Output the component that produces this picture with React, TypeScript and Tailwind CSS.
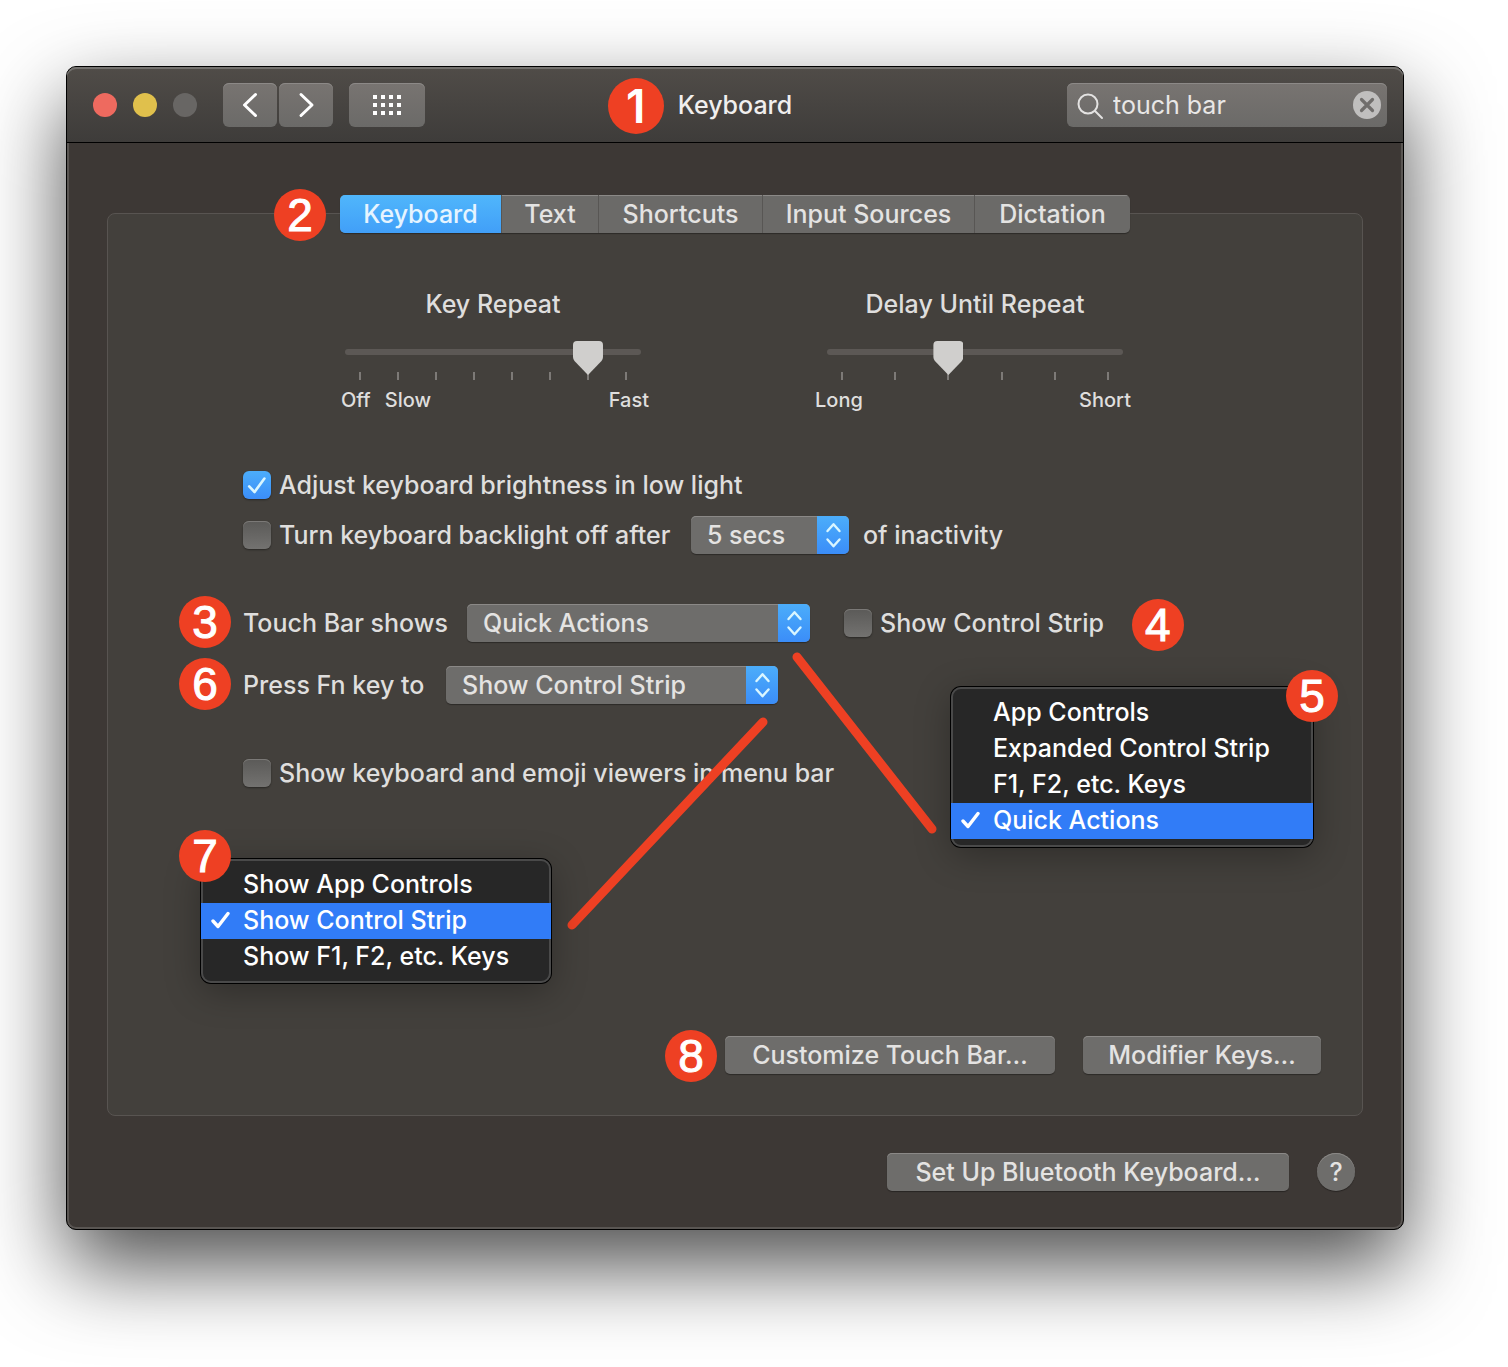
import { useState } from "react";
import type { ReactNode } from "react";
import clsx from "clsx";

const tabs = [
  { name: "Keyboard", width: "w-[162px]" },
  { name: "Text", width: "w-[97px]" },
  { name: "Shortcuts", width: "w-[164px]" },
  { name: "Input Sources", width: "w-[212px]" },
  { name: "Dictation", width: "w-[155px]" },
];

const touchBarOptions = [
  "App Controls",
  "Expanded Control Strip",
  "F1, F2, etc. Keys",
  "Quick Actions",
];

const fnKeyOptions = [
  "Show App Controls",
  "Show Control Strip",
  "Show F1, F2, etc. Keys",
];

const raised =
  "bg-[#6e6d6b] shadow-[inset_0_1px_0_#8b8987,0_1px_1px_rgba(0,0,0,0.35)]";

const toolbarFill =
  "rounded-md bg-linear-to-b from-[#787471] to-[#6b6a68] shadow-[inset_0_1px_0_#8c8987]";

function Badge({
  children,
  className,
  size = "size-[52px] font-['Liberation_Sans',sans-serif] font-normal [-webkit-text-stroke:1px_white]",
}: {
  children: ReactNode;
  className: string;
  size?: string;
}) {
  return (
    <span
      className={clsx(
        "absolute z-20 flex items-center justify-center rounded-full bg-[#ee4023] text-[46px] leading-none text-white",
        size,
        className,
      )}
    >
      {children}
    </span>
  );
}

function PushButton({ children, className }: { children: ReactNode; className?: string }) {
  return (
    <button
      type="button"
      className={clsx("h-[38px] rounded-[5px] text-center text-[#e4e3e2]", raised, className)}
    >
      {children}
    </button>
  );
}

function Checkbox({
  label,
  defaultChecked,
  className,
}: {
  label: string;
  defaultChecked?: boolean;
  className?: string;
}) {
  return (
    <label className={clsx("flex items-center gap-2 whitespace-nowrap", className)}>
      <span className="relative block size-7">
        <input
          type="checkbox"
          defaultChecked={defaultChecked}
          className="peer block size-7 appearance-none rounded-md bg-linear-to-b from-[#5b5a58] to-[#737270] shadow-[inset_0_1px_0_#7b7977,0_1px_2px_rgba(0,0,0,0.4)] checked:from-[#4cadfa] checked:to-[#3b8df8] checked:shadow-[0_1px_2px_rgba(0,0,0,0.4)]"
        />
        <svg
          viewBox="0 0 28 28"
          className="pointer-events-none absolute inset-0 hidden size-7 peer-checked:block"
          fill="none"
          stroke="#d9f6ff"
          strokeWidth="2.6"
          strokeLinecap="round"
          strokeLinejoin="round"
        >
          <path d="M6.2 15.4L11.6 21L21.4 7.6" />
        </svg>
      </span>
      {label}
    </label>
  );
}

function PopUp({
  id,
  label,
  value,
  options,
  className,
}: {
  id: string;
  label?: string;
  value: string;
  options: string[];
  className: string;
}) {
  return (
    <span className={clsx("relative block h-[38px]", className)}>
      <select
        id={id}
        aria-label={label}
        defaultValue={value}
        className={clsx(
          "block h-full w-full appearance-none rounded-[5px] pl-4 text-[#e4e3e2]",
          raised,
        )}
      >
        {options.map((option) => (
          <option key={option}>{option}</option>
        ))}
      </select>
      <span className="pointer-events-none absolute inset-y-0 right-0 w-8 rounded-r-[5px] bg-linear-to-b from-[#4cadfa] to-[#3b8df8]">
        <svg
          viewBox="0 0 32 38"
          className="h-full w-full"
          fill="none"
          stroke="#d9f6ff"
          strokeWidth="2.4"
          strokeLinecap="round"
          strokeLinejoin="round"
        >
          <path d="M10.5 15L16.5 8.2L22.5 15M10.5 23.5L16.5 30.3L22.5 23.5" />
        </svg>
      </span>
    </span>
  );
}

function TickSlider({
  id,
  title,
  max,
  value,
  labels,
  labelsClass,
}: {
  id: string;
  title: string;
  max: number;
  value: number;
  labels: ReactNode;
  labelsClass: string;
}) {
  return (
    <div className="w-[296px]">
      <label htmlFor={id} className="block text-center">
        {title}
      </label>
      <div className="relative mt-[29px]">
        <div className="absolute inset-x-3.5 top-[23px] flex justify-between">
          {Array.from({ length: max + 1 }, (_, i) => (
            <span key={i} className="h-2 w-0.5 bg-[#7d7a77]" />
          ))}
        </div>
        <input
          id={id}
          type="range"
          min={0}
          max={max}
          defaultValue={value}
          className="relative block h-1.5 w-full appearance-none rounded-full bg-[#5c5855] [&::-webkit-slider-runnable-track]:h-1.5 [&::-webkit-slider-thumb]:-mt-2 [&::-webkit-slider-thumb]:h-[34px] [&::-webkit-slider-thumb]:w-[30px] [&::-webkit-slider-thumb]:appearance-none [&::-webkit-slider-thumb]:bg-[#d0cfcd] [&::-webkit-slider-thumb]:[clip-path:path('M4_0H26Q30_0_30_4V16Q30_18_28.5_20L15_34L1.5_20Q0_18_0_16V4Q0_0_4_0Z')]"
        />
      </div>
      <div className={clsx("mt-[33px] flex justify-between text-xl leading-6", labelsClass)}>
        {labels}
      </div>
    </div>
  );
}

function Menu({
  items,
  selected,
  className,
}: {
  items: string[];
  selected: string;
  className: string;
}) {
  return (
    <ul
      className={clsx(
        "absolute z-10 rounded-[10px] bg-[#272727] py-2 text-white shadow-[inset_0_0_0_2px_#4a4a4a,0_0_0_1px_#000,0_8px_36px_rgba(0,0,0,0.3)]",
        className,
      )}
    >
      {items.map((item) => (
        <li
          key={item}
          className={clsx(
            "relative h-9 pl-[42px] leading-[34px]",
            item === selected && "bg-[#317cf7]",
          )}
        >
          {item === selected && (
            <svg
              viewBox="0 0 20 20"
              className="absolute top-2 left-2.5 size-5"
              fill="none"
              stroke="currentColor"
              strokeWidth="3.4"
              strokeLinecap="round"
              strokeLinejoin="round"
            >
              <path d="M2 10L7 15.5L17 2.5" />
            </svg>
          )}
          {item}
        </li>
      ))}
    </ul>
  );
}

function ToolButton({ label, children }: { label: string; children: ReactNode }) {
  return (
    <button type="button" aria-label={label} className={clsx("h-11 w-[54px]", toolbarFill)}>
      <svg
        viewBox="0 0 54 44"
        className="h-full w-full"
        fill="none"
        stroke="#fff"
        strokeWidth="3"
        strokeLinecap="round"
        strokeLinejoin="round"
      >
        {children}
      </svg>
    </button>
  );
}

function TitleBar() {
  const [query, setQuery] = useState("touch bar");

  return (
    <header className="grid h-[76px] grid-cols-[1fr_auto_1fr] items-center rounded-t-[9px] border-b border-black bg-linear-to-b from-[#504c48] to-[#3e3c3a] px-4 shadow-[inset_0_2px_0_#74726f]">
      <div className="flex items-center pl-2.5">
        <div className="flex gap-4">
          <button type="button" aria-label="Close" className="size-6 rounded-full bg-[#ee6a5f]" />
          <button type="button" aria-label="Minimize" className="size-6 rounded-full bg-[#e0c04c]" />
          <button type="button" aria-label="Zoom" className="size-6 rounded-full bg-[#686664]" />
        </div>
        <div className="ml-[26px] flex gap-0.5">
          <ToolButton label="Back">
            <path d="M32.5 11.5L21.5 22L32.5 32.5" />
          </ToolButton>
          <ToolButton label="Forward">
            <path d="M22 11.5L33 22L22 32.5" />
          </ToolButton>
        </div>
        <button
          type="button"
          aria-label="Show All"
          className={clsx("ml-4 flex h-11 w-[76px] items-center justify-center", toolbarFill)}
        >
          <svg viewBox="0 0 28 20" className="h-5 w-7" fill="#fff">
            {[0, 8, 16].map((y) =>
              [0, 8, 16, 24].map((x) => (
                <rect key={`${x}-${y}`} x={x} y={y} width="4" height="4" />
              )),
            )}
          </svg>
        </button>
      </div>

      <div className="relative">
        <Badge
          size="size-14 font-semibold"
          className="-top-[11px] right-full mr-3.5"
        >
          1
        </Badge>
        <h1 className="text-[#f0efee]">Keyboard</h1>
      </div>

      <div className="relative w-80 justify-self-end">
        <svg
          viewBox="0 0 28 28"
          className="pointer-events-none absolute top-[9px] left-[9px] size-7"
          fill="none"
          stroke="#e4e3e2"
          strokeWidth="2"
          strokeLinecap="round"
        >
          <circle cx="12" cy="12" r="9.5" />
          <path d="M19 19L26 26" />
        </svg>
        <input
          type="text"
          aria-label="Search"
          value={query}
          onChange={(e) => setQuery(e.target.value)}
          className={clsx(
            "block h-11 w-full pr-12 pl-[46px] font-normal text-[#e8e7e6]",
            toolbarFill,
          )}
        />
        <button
          type="button"
          aria-label="Clear search"
          onClick={() => setQuery("")}
          className="absolute top-2 right-1.5 size-7 rounded-full bg-[#c0bfbe]"
        >
          <svg
            viewBox="0 0 28 28"
            className="size-7"
            stroke="#706e6c"
            strokeWidth="3.2"
            strokeLinecap="round"
          >
            <path d="M8.5 8.5L19.5 19.5M19.5 8.5L8.5 19.5" />
          </svg>
        </button>
      </div>
    </header>
  );
}

export default function App() {
  const [tab, setTab] = useState("Keyboard");

  return (
    <main className="min-h-screen overflow-hidden bg-white pt-[66px] pr-[104px] pb-[137px] pl-[66px] font-[Inter,sans-serif] text-[25px] leading-8 font-medium text-[#dfdedd]">
      <div className="rounded-[10px] border border-black bg-[#3d3835] shadow-[inset_0_0_0_2px_#5a5653,0_36px_84px_rgba(0,0,0,0.7)]">
        <TitleBar />

        <div className="px-10 pt-[52px] pb-[38px]">
          {/* Tab bar sits on the top edge of the panel */}
          <div className="relative z-10 mx-auto flex w-[790px]">
            <Badge className="-top-1.5 -left-[66px]">2</Badge>
            <div
              role="tablist"
              className="flex h-[38px] divide-x divide-[#585654] overflow-hidden rounded-[5px] bg-[#6b6a68] shadow-[0_1px_1px_rgba(0,0,0,0.35)]"
            >
              {tabs.map(({ name, width }) => (
                <button
                  key={name}
                  type="button"
                  role="tab"
                  aria-selected={tab === name}
                  onClick={() => setTab(name)}
                  className={clsx(
                    "text-center",
                    width,
                    tab === name
                      ? "bg-linear-to-b from-[#50b6fb] to-[#419ff8] text-[#e6f4ff]"
                      : "text-[#e4e3e2] shadow-[inset_0_1px_0_#8b8987]",
                  )}
                >
                  {name}
                </button>
              ))}
            </div>
          </div>

          <section className="-mt-5 rounded-lg border border-[#585451] bg-[#43403c]">
            <div className="relative mx-auto max-w-[1254px] pt-[74px] pr-[41px] pb-[41px] pl-[135px]">
              <div className="flex gap-[186px] pl-[102px]">
                <TickSlider
                  id="key-repeat"
                  title="Key Repeat"
                  max={7}
                  value={6}
                  labelsClass="-ml-1 -mr-2"
                  labels={
                    <>
                      <span className="flex gap-3.5">
                        <span>Off</span>
                        <span>Slow</span>
                      </span>
                      <span>Fast</span>
                    </>
                  }
                />
                <TickSlider
                  id="delay"
                  title="Delay Until Repeat"
                  max={5}
                  value={2}
                  labelsClass="-ml-3 -mr-2"
                  labels={
                    <>
                      <span>Long</span>
                      <span>Short</span>
                    </>
                  }
                />
              </div>

              <div className="mt-[54px] flex h-[38px] items-center">
                <Checkbox label="Adjust keyboard brightness in low light" defaultChecked />
              </div>
              <div className="mt-3 flex h-[38px] items-center">
                <Checkbox label="Turn keyboard backlight off after" className="w-[448px]" />
                <PopUp
                  id="backlight"
                  label="Turn backlight off after"
                  value="5 secs"
                  options={["5 secs", "10 secs", "30 secs", "1 min", "5 mins"]}
                  className="mr-3.5 w-[158px]"
                />
                <span>of inactivity</span>
              </div>

              <div className="relative mt-[50px] flex h-[38px] items-center">
                <Badge className="-top-2 -left-16">3</Badge>
                <label htmlFor="touch-bar" className="w-56">
                  Touch Bar shows
                </label>
                <PopUp
                  id="touch-bar"
                  value="Quick Actions"
                  options={touchBarOptions}
                  className="mr-[34px] w-[343px]"
                />
                <div className="relative">
                  <Checkbox label="Show Control Strip" />
                  <Badge className="-top-2 left-full ml-7">4</Badge>
                </div>
              </div>
              <div className="relative mt-6 flex h-[38px] items-center">
                <Badge className="-top-2 -left-16">6</Badge>
                <label htmlFor="fn-key" className="w-[203px]">
                  Press Fn key to
                </label>
                <PopUp
                  id="fn-key"
                  value="Show Control Strip"
                  options={fnKeyOptions}
                  className="w-[332px]"
                />
              </div>

              <div className="mt-[50px] flex h-[38px] items-center">
                <Checkbox label="Show keyboard and emoji viewers in menu bar" />
              </div>

              <div className="mt-[244px] flex justify-end gap-7">
                <div className="relative">
                  <Badge className="-top-1.5 right-full mr-2">8</Badge>
                  <PushButton className="w-[330px]">Customize Touch Bar…</PushButton>
                </div>
                <PushButton className="w-[238px]">Modifier Keys…</PushButton>
              </div>

              {/* Lines from the pop-ups to their opened menus */}
              <svg
                viewBox="0 0 364 274"
                className="pointer-events-none absolute top-[439px] left-[460px] h-[274px] w-[364px] overflow-visible"
                stroke="#ee4023"
                strokeWidth="9"
                strokeLinecap="round"
              >
                <path d="M229 4L364 176" />
                <path d="M195 69L4 272" />
              </svg>

              <Menu
                items={touchBarOptions}
                selected="Quick Actions"
                className="top-[473px] left-[843px] w-[362px]"
              />
              <Badge className="top-[456px] left-[1178px]">5</Badge>
              <Menu
                items={fnKeyOptions}
                selected="Show Control Strip"
                className="top-[645px] left-[93px] w-[350px]"
              />
              <Badge className="top-[616px] left-[71px]">7</Badge>
            </div>
          </section>

          <footer className="mt-[37px] flex justify-end gap-7 pr-2">
            <PushButton className="w-[402px]">Set Up Bluetooth Keyboard…</PushButton>
            <button
              type="button"
              aria-label="Help"
              className={clsx("size-[38px] rounded-full text-center text-[#e4e3e2]", raised)}
            >
              ?
            </button>
          </footer>
        </div>
      </div>
    </main>
  );
}
